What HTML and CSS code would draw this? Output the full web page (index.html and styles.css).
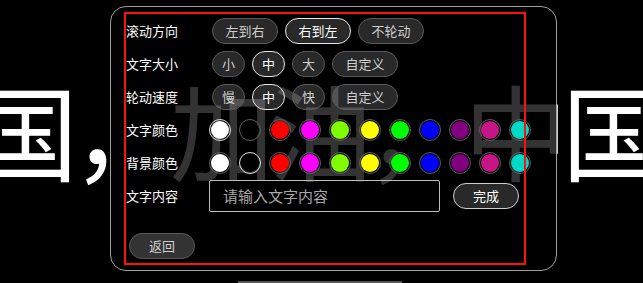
FILE: index.html
```html
<!DOCTYPE html>
<html lang="zh">
<head>
<meta charset="utf-8">
<title>滚动字幕设置</title>
<link rel="stylesheet" href="styles.css">
</head>
<body>
<div class="stage">
  <div class="marquee">国，加油，中国</div>
  <div class="panel">
    <div class="content">
      <div class="row">
        <span class="label">滚动方向</span>
        <div class="opts">
          <button class="pill wide">左到右</button>
          <button class="pill wide on">右到左</button>
          <button class="pill wide">不轮动</button>
        </div>
      </div>
      <div class="row">
        <span class="label">文字大小</span>
        <div class="opts">
          <button class="pill">小</button>
          <button class="pill on">中</button>
          <button class="pill">大</button>
          <button class="pill wide">自定义</button>
        </div>
      </div>
      <div class="row">
        <span class="label">轮动速度</span>
        <div class="opts">
          <button class="pill">慢</button>
          <button class="pill on">中</button>
          <button class="pill">快</button>
          <button class="pill wide">自定义</button>
        </div>
      </div>
      <div class="row">
        <span class="label">文字颜色</span>
        <div class="swatches">
          <span class="dot on c-white"></span>
          <span class="dot c-black"></span>
          <span class="dot c-red"></span>
          <span class="dot c-magenta"></span>
          <span class="dot c-chartreuse"></span>
          <span class="dot c-yellow"></span>
          <span class="dot c-lime"></span>
          <span class="dot c-blue"></span>
          <span class="dot c-purple"></span>
          <span class="dot c-pink"></span>
          <span class="dot c-cyan"></span>
        </div>
      </div>
      <div class="row">
        <span class="label">背景颜色</span>
        <div class="swatches">
          <span class="dot c-white"></span>
          <span class="dot on c-black"></span>
          <span class="dot c-red"></span>
          <span class="dot c-magenta"></span>
          <span class="dot c-chartreuse"></span>
          <span class="dot c-yellow"></span>
          <span class="dot c-lime"></span>
          <span class="dot c-blue"></span>
          <span class="dot c-purple"></span>
          <span class="dot c-pink"></span>
          <span class="dot c-cyan"></span>
        </div>
      </div>
      <div class="row text-row">
        <span class="label">文字内容</span>
        <input class="text-input" type="text" placeholder="请输入文字内容">
        <button class="pill wide done">完成</button>
      </div>
      <button class="pill wide back">返回</button>
    </div>
  </div>
  <div class="home-bar"></div>
</div>
</body>
</html>
```
FILE: styles.css
```css
* { box-sizing: border-box; }
html, body {
  margin: 0;
  padding: 0;
  background: #000;
}
body {
  font-family: "Noto Sans CJK SC", "Noto Sans", sans-serif;
  color: #fff;
}
.stage {
  position: relative;
  width: 643px;
  height: 283px;
  overflow: hidden;
  background: #000;
}
.marquee {
  position: absolute;
  left: -26px;
  top: 77px;
  font-size: 104px;
  letter-spacing: -6px;
  line-height: 1;
  white-space: nowrap;
  color: #fff;
}
.panel {
  position: absolute;
  left: 110px;
  top: 6px;
  width: 447px;
  height: 265px;
  border: 1px solid #a0a0a0;
  border-radius: 16px;
  background: rgba(0, 0, 0, 0.8);
}
.content {
  margin: 5px 0 0 13px;
  width: 402px;
  height: 253px;
  padding: 2px;
  outline: 2px solid #ff1010;
  outline-offset: -2px;
}
.row {
  display: flex;
  align-items: center;
  height: 33px;
}
.label {
  width: 83px;
  flex: none;
  font-size: 13px;
  color: #fff;
  white-space: nowrap;
}
.opts {
  display: flex;
  gap: 7px;
  padding-left: 3px;
}
.pill {
  height: 26px;
  width: 33px;
  padding: 0;
  border: 1px solid #5a5a5a;
  border-radius: 13px;
  background: rgba(255, 255, 255, 0.16);
  color: #cfcfcf;
  font-family: inherit;
  font-size: 13px;
  line-height: 24px;
  text-align: center;
}
.pill.wide { width: 66px; }
.pill.on {
  border-color: #e8e8e8;
  color: #fff;
}
.swatches {
  display: flex;
  gap: 8px;
}
.dot {
  width: 22px;
  height: 22px;
  border-radius: 50%;
  border: 1px solid #5c5c5c;
  padding: 1px;
  background-clip: content-box;
  flex: none;
}
.dot.on { border-color: #e0e0e0; }
.c-white { background-color: #fff; }
.c-black { background-color: #000; }
.c-red { background-color: #ff0000; }
.c-magenta { background-color: #ff00ff; }
.c-chartreuse { background-color: #7fff00; }
.c-yellow { background-color: #ffff00; }
.c-lime { background-color: #00ff00; }
.c-blue { background-color: #0000ff; }
.c-purple { background-color: #800080; }
.c-pink { background-color: #c71585; }
.c-cyan { background-color: #00d8c8; }
.text-row { height: 33px; }
.text-input {
  width: 231px;
  height: 32px;
  border: 1px solid #bdbdbd;
  border-radius: 2px;
  background: transparent;
  padding: 0 0 0 13px;
  color: #fff;
  font-family: inherit;
  font-size: 15px;
  outline: none;
}
.text-input::placeholder { color: #a8a8a8; }
.done {
  margin-left: 13px;
  border-color: #cfcfcf;
  color: #fff;
}
.back {
  display: block;
  margin: 21px 0 0 3px;
  background: #333;
}
.home-bar {
  position: absolute;
  left: 238px;
  top: 281px;
  width: 164px;
  height: 2px;
  background: #555;
}
```
